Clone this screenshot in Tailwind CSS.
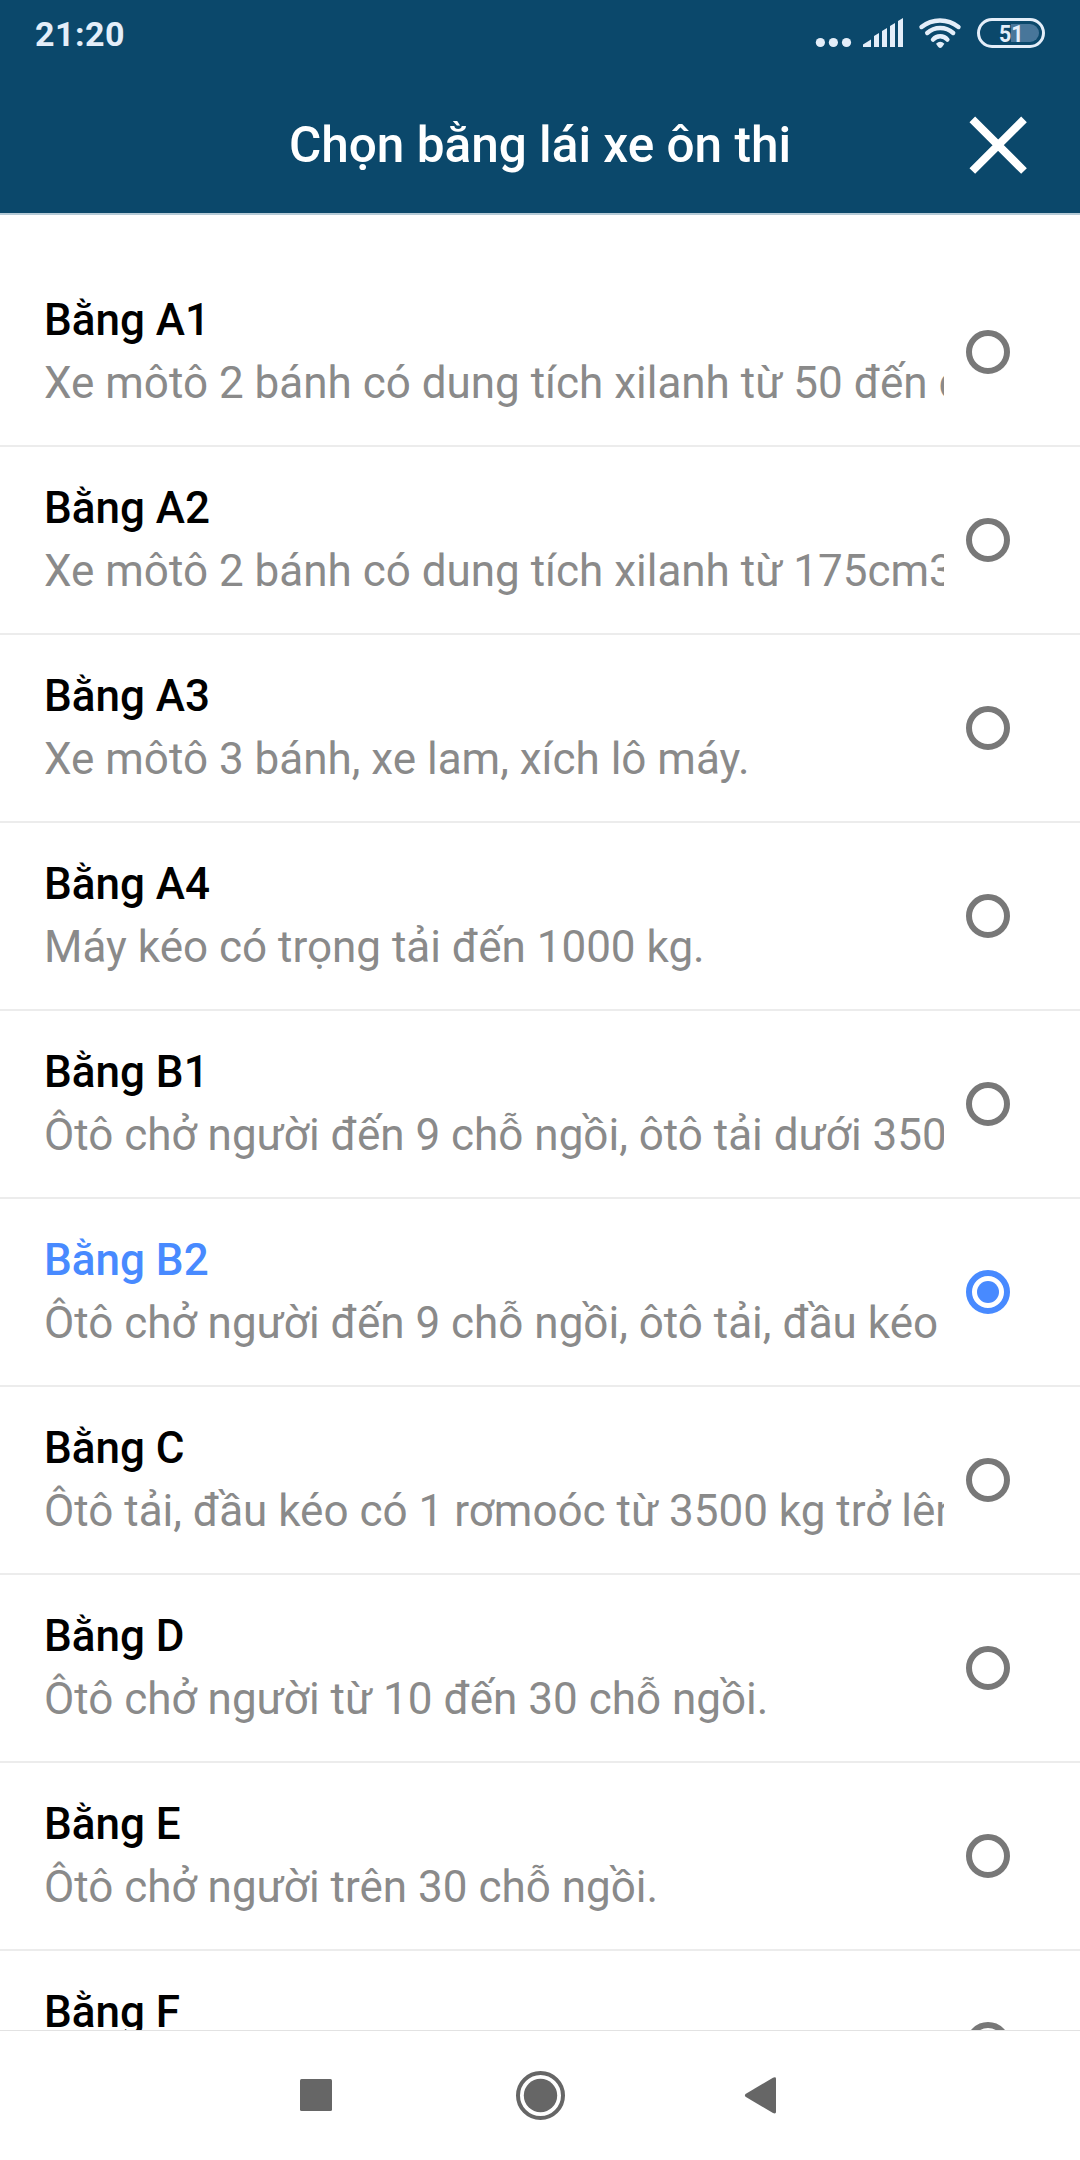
<!DOCTYPE html>
<html lang="vi">
<head>
    <meta charset="UTF-8">
    <meta name="viewport" content="width=device-width, initial-scale=1.0">
    <title>Chọn bằng lái xe ôn thi</title>
    <script src="https://cdn.jsdelivr.net/npm/@tailwindcss/browser@4"></script>
</head>
<body class="font-[Roboto,sans-serif] bg-white">
    <div class="flex flex-col w-[1080px] h-[2160px] overflow-hidden">
        <!-- Header -->
        <header class="shrink-0 h-[215px] bg-[#0b486b] border-b-2 border-[#b5cad6]">
            <!-- Status Bar -->
            <div class="flex items-center justify-between h-[66px] pl-[35px] pr-[35px] text-[#e4eef9]">
                <div class="text-[34px] leading-[40px] font-bold tracking-[0.5px] pt-0.5">21:20</div>
                <svg width="230" height="66" viewBox="815 0 230 66" fill="currentColor">
                    <circle cx="820.4" cy="42.5" r="4.6"/>
                    <circle cx="833.4" cy="42.5" r="4.6"/>
                    <circle cx="846.5" cy="42.5" r="4.6"/>
                    <path d="M863 47v-2.500l8-5V47zM874 47V36l5-3v14zM882 47V31l5-3v19zM890 47V26l5-3v24zM898 47V21l5-3v29z"/>
                    <g fill="none" stroke="currentColor" stroke-width="4.4" stroke-linecap="round">
                        <path d="M921.500 27a29.600 29.600 0 0 1 37 0"/>
                        <path d="M927.200 33a19.400 19.400 0 0 1 26 0"/>
                        <path d="M933 39.600a9.500 9.500 0 0 1 14.400 0"/>
                    </g>
                    <path d="M936 43.800q4.200-4 8.400 0l-2.300 3.200q-1.900 2-3.800 0z"/>
                    <rect x="978.500" y="19.500" width="65" height="27" rx="13.500" fill="none" stroke="currentColor" stroke-width="3"/>
                    <path d="M1011 24h19a9 9 0 0 1 0 18h-19z" fill="#48769a"/>
                    <text x="999" y="41.800" font-size="24.5" font-weight="700" textLength="24.500" lengthAdjust="spacingAndGlyphs">51</text>
                </svg>
            </div>
            <!-- Title Bar -->
            <div class="grid grid-cols-[1fr_auto_1fr] items-center h-[147px] px-[53px] pt-[10px] text-white">
                <span></span>
                <h1 class="text-[49.5px] leading-[60px] font-medium">Chọn bằng lái xe ôn thi</h1>
                <svg class="justify-self-end" width="58" height="58" viewBox="0 0 58 58" stroke="currentColor" stroke-width="8">
                    <path d="M3.300 3.300 55 55M55 3.300 3.300 55"/>
                </svg>
            </div>
        </header>

        <!-- License List -->
        <main id="license-list" class="flex-1 min-h-0 overflow-hidden pt-[44px]"></main>

        <!-- Navigation Bar -->
        <nav class="shrink-0 h-[130px] border-t border-[#e2e2e2] bg-white text-[#666]">
            <svg width="1080" height="129" viewBox="0 2031 1080 129" fill="currentColor">
                <rect x="300" y="2079" width="32" height="32" rx="1.5"/>
                <circle cx="540.5" cy="2095.5" r="22.5" fill="none" stroke="currentColor" stroke-width="4"/>
                <circle cx="540.5" cy="2095.5" r="16.7"/>
                <path d="M745.500 2094 773 2077.700q3-1 3 1v33.400q0 2-3 1L745.500 2096.700q-1.200-1.300 0-2.700z"/>
            </svg>
        </nav>
    </div>

    <template id="license-row">
        <label class="flex h-[188px] border-b-2 border-[#ececec] pl-[44px]">
            <div class="w-[900px] overflow-hidden whitespace-nowrap pt-[34px] text-[44px]">
                <div class="name leading-[54px] font-medium text-black"></div>
                <div class="description mt-[9px] leading-[54px] text-[#8a8a8a]"></div>
            </div>
            <div class="radio self-center ml-[22px] flex items-center justify-center size-[44px] rounded-full border-6 border-[#787878]">
                <span class="dot hidden size-[22px] rounded-full bg-[#488aff]"></span>
            </div>
        </label>
    </template>

    <script>
        const licenses = [
            ["Bằng A1", "Xe môtô 2 bánh có dung tích xilanh từ 50 đến dưới 175cm3."],
            ["Bằng A2", "Xe môtô 2 bánh có dung tích xilanh từ 175cm3 trở lên."],
            ["Bằng A3", "Xe môtô 3 bánh, xe lam, xích lô máy."],
            ["Bằng A4", "Máy kéo có trọng tải đến 1000 kg."],
            ["Bằng B1", "Ôtô chở người đến 9 chỗ ngồi, ôtô tải dưới 3500 kg."],
            ["Bằng B2", "Ôtô chở người đến 9 chỗ ngồi, ôtô tải, đầu kéo"],
            ["Bằng C", "Ôtô tải, đầu kéo có 1 rơmoóc từ 3500 kg trở lên."],
            ["Bằng D", "Ôtô chở người từ 10 đến 30 chỗ ngồi."],
            ["Bằng E", "Ôtô chở người trên 30 chỗ ngồi."],
            ["Bằng F", ""]
        ];
        const selected = "Bằng B2";
        const list = document.getElementById("license-list");
        const template = document.getElementById("license-row");

        licenses.forEach(([name, description]) => {
            const row = template.content.cloneNode(true);
            row.querySelector(".name").textContent = name;
            row.querySelector(".description").textContent = description;
            if (name === selected) {
                row.querySelector(".name").classList.replace("text-black", "text-[#488aff]");
                row.querySelector(".radio").classList.replace("border-[#787878]", "border-[#488aff]");
                row.querySelector(".dot").classList.remove("hidden");
            }
            list.appendChild(row);
        });
    </script>
</body>
</html>
